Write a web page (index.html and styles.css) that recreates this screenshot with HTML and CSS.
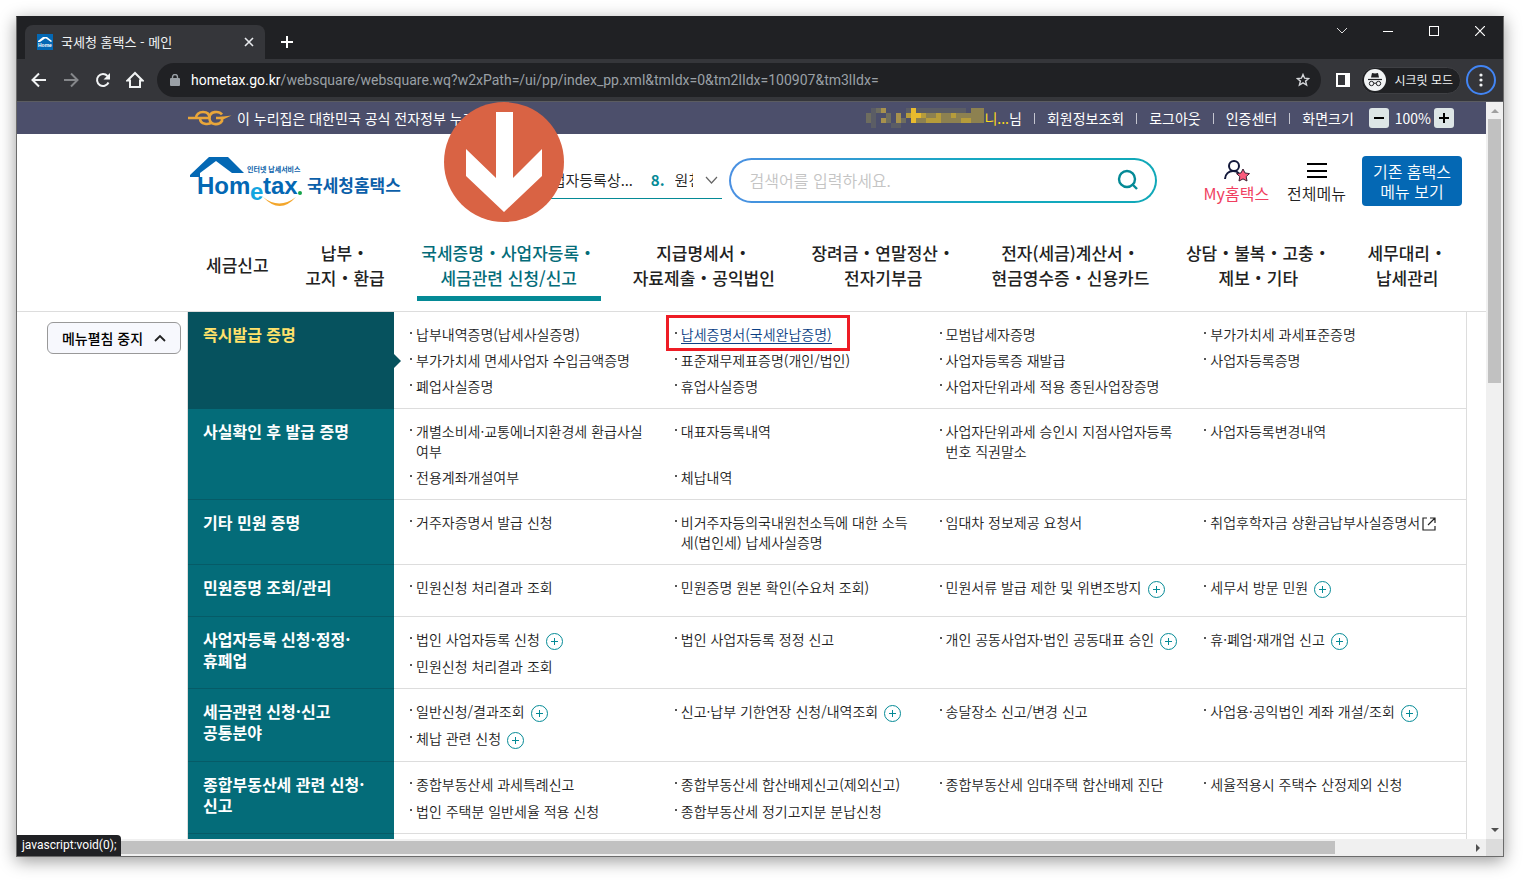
FILE: index.html
```html
<!DOCTYPE html>
<html lang="ko">
<head>
<meta charset="utf-8">
<title>국세청 홈택스 - 메인</title>
<link rel="stylesheet" href="styles.css">
</head>
<body>
<svg class="defs" aria-hidden="true">
  <symbol id="plus" viewBox="0 0 17 17"><circle cx="8.500" cy="8.500" r="8"/><path d="M5 8.500h7M8.500 5v7"/></symbol>
</svg>
<div class="window">
  <div class="tabstrip">
    <div class="tab">
      <svg class="favicon" viewBox="0 0 16 16"><rect width="16" height="16" fill="#0468b4"/><path d="M1 7 6 3h4l5 4-1 1-5-3.500H8L3 8H1z" fill="#fff"/><text x="1" y="13" class="favtext">Home</text></svg>
      <span class="tab-title">국세청 홈택스 - 메인</span>
      <button class="plain" aria-label="탭 닫기"><svg width="10" height="10"><path d="M1 1l8 8M9 1 1 9" stroke="#e8eaed" stroke-width="1.600"/></svg></button>
    </div>
    <button class="plain newtab" aria-label="새 탭"><svg width="12" height="12"><path d="M6 0v12M0 6h12" stroke="#fff" stroke-width="2"/></svg></button>
    <div class="controls">
      <button class="plain" aria-label="탭 검색"><svg width="12" height="8"><path d="M1 1l5 5 5-5" fill="none" stroke="#ddd"/></svg></button>
      <button class="plain" aria-label="최소화"><svg width="10" height="10"><path d="M0 5.500h10" stroke="#fff"/></svg></button>
      <button class="plain" aria-label="최대화"><svg width="10" height="10"><rect x=".5" y=".5" width="9" height="9" fill="none" stroke="#fff"/></svg></button>
      <button class="plain" aria-label="닫기"><svg width="10" height="10"><path d="M0 0l10 10M10 0 0 10" stroke="#fff" stroke-width="1.200"/></svg></button>
    </div>
  </div>
  <div class="toolbar">
    <button class="plain tool" aria-label="뒤로"><svg width="16" height="16"><path d="M15 8H2M8 1.500 1.500 8 8 14.500" fill="none" stroke="#f1f3f4" stroke-width="2"/></svg></button>
    <button class="plain tool" aria-label="앞으로"><svg width="16" height="16"><path d="M1 8h13M8 1.500 14.500 8 8 14.500" fill="none" stroke="#85878a" stroke-width="2"/></svg></button>
    <button class="plain tool" aria-label="새로고침"><svg width="16" height="16"><path d="M13.500 10.500A6 6 0 1 1 12.500 4" fill="none" stroke="#f1f3f4" stroke-width="2"/><path d="M15 1v6.500H8.500z" fill="#f1f3f4"/></svg></button>
    <button class="plain tool" aria-label="홈"><svg width="18" height="18"><path d="M1.500 9.500 9 2l7.500 7.500H14v6.500H4V9.500z" fill="none" stroke="#f1f3f4" stroke-width="2"/></svg></button>
    <div class="address">
      <svg width="10" height="13"><rect y="4" width="10" height="8" rx="1" fill="#9aa0a6"/><path d="M2.500 5V3a2.500 2.500 0 0 1 5 0v2" fill="none" stroke="#9aa0a6" stroke-width="1.400"/></svg>
      <span class="url"><b>hometax.go.kr</b>/websquare/websquare.wq?w2xPath=/ui/pp/index_pp.xml&amp;tmIdx=0&amp;tm2lIdx=100907&amp;tm3lIdx=</span>
      <button class="plain" aria-label="북마크"><svg width="14" height="14" viewBox="0 0 14 14"><path d="M7 1.500 8.600 5.200l4 .3-3 2.600 1 3.900L7 9.900 3.400 12l1-3.900-3-2.600 4-.3z" fill="none" stroke="#d5d7da" stroke-width="1.400"/></svg></button>
    </div>
    <button class="plain panel" aria-label="측면 패널"><svg width="14" height="14"><rect x="1" y="1" width="12" height="12" fill="none" stroke="#fff" stroke-width="2"/><path d="M9 1h4v12H9z" fill="#fff"/></svg></button>
    <div class="incognito">
      <svg width="22" height="22"><circle cx="11" cy="11" r="11" fill="#f1f3f4"/><path d="M7 8.500 8 4l3 .6L14 4l1 4.500z" fill="#202124"/><path d="M4 10.500h14" stroke="#202124" stroke-width="1.200"/><g fill="none" stroke="#202124"><circle cx="7.500" cy="14.500" r="2.200"/><circle cx="14.500" cy="14.500" r="2.200"/><path d="M9.700 14.200h2.600"/></g></svg>
      <span>시크릿 모드</span>
    </div>
    <button class="more" aria-label="메뉴"><svg width="4" height="14" fill="#f1f3f4"><circle cx="2" cy="2" r="1.600"/><circle cx="2" cy="7" r="1.600"/><circle cx="2" cy="12" r="1.600"/></svg></button>
  </div>

  <div class="viewport">
    <div class="page">
      <div class="govbar">
        <svg class="eg" width="44" height="18" viewBox="0 0 44 18" fill="none" stroke="#e9a63a" stroke-width="2.600"><path d="M0 9h21.500M8 9c0-3.500 3-6 7-6 4.500 0 6.500 2.500 6.500 6M12 9c0 7 9 7 12 4"/><path d="M34 5.500C31 1.500 21.500 2 21.500 9s9 8 12.500 3V9h-6"/><path d="M31 8l12.500-1.500L34 11z" fill="#e9a63a" stroke="none"/></svg>
        <span>이 누리집은 대한민국 공식 전자정부 누리집</span>
        <ul class="utility">
          <li class="user"><svg width="118" height="20" viewBox="0 0 118 20"><path fill="#6e6d5f" d="M0 5h5v10H0zM10 0h10v5H10zM20 5h5v10h-5zM35 10h5v5h-5z"/><path fill="#5b5d65" d="M5 0h5v20H5zM25 15h10v5H25zM40 0h60v5H40z"/><path fill="#a7914d" d="M15 0h5v5h-5zM15 10h5v5h-5zM30 5h5v10h-5zM40 5h5v5h-5zM60 5h20v5H60zM95 5h15v10H95z"/><path fill="#8d8150" d="M50 5h68v10H50zM105 0h13v5h-13z"/><path fill="#b69c3b" d="M40 5h5v5h-5zM55 5h5v5h-5zM60 10h15v5H60zM70 5h5v5h-5zM85 5h5v5h-5zM95 10h10v5H95z"/><path fill="#e8ba2e" d="M45 0h5v15h-5zM50 5h5v5h-5z"/></svg><em>니...</em>님</li>
          <li><a href="#">회원정보조회</a></li>
          <li><a href="#">로그아웃</a></li>
          <li><a href="#">인증센터</a></li>
          <li class="zoom">화면크기
            <button aria-label="축소"><svg width="10" height="10"><path d="M0 5h10" stroke="#000" stroke-width="2"/></svg></button>
            <span>100%</span>
            <button aria-label="확대"><svg width="10" height="10"><path d="M0 5h10M5 0v10" stroke="#000" stroke-width="2"/></svg></button>
          </li>
        </ul>
      </div>

      <header class="header">
        <a class="logo" href="#" aria-label="Hometax 국세청홈택스">
          <svg width="212" height="52" viewBox="0 0 212 52">
            <path d="M0 19 19 1h19l16 16H42L26 5 10 17v21H9V21H0z" fill="#0468b4"/>
            <text x="57" y="16" class="logo-small">인터넷 납세서비스</text>
            <text x="7" y="38" class="logo-main">Hom</text>
            <text x="60" y="44" class="logo-e">e</text>
            <text x="73" y="38" class="logo-main">tax</text>
            <circle cx="110" cy="37" r="2" fill="#16a34a"/>
            <path d="M73 41q16 13 33 0-16 18-33 0z" fill="#f3a62b"/>
            <text x="117" y="36" class="logo-ko">국세청홈택스</text>
          </svg>
        </a>
        <div class="keywords">
          <div class="keyword-list"><span>사업자등록상...</span><strong>8.</strong><span class="cut">원천</span></div>
          <button class="plain" aria-label="펼치기"><svg width="13" height="8"><path d="M1 1l5.500 6L12 1" fill="none" stroke="#666" stroke-width="1.200"/></svg></button>
        </div>
        <form class="search">
          <input type="text" placeholder="검색어를 입력하세요." aria-label="검색어">
          <button type="button" class="plain" aria-label="검색"><svg width="22" height="22"><circle cx="10" cy="10" r="8" fill="none" stroke="#048a96" stroke-width="2.400"/><path d="M15 15l5 5" stroke="#048a96" stroke-width="2.400"/></svg></button>
        </form>
        <a class="quick my" href="#"><svg width="28" height="22"><g fill="none" stroke="#12183a" stroke-width="2"><circle cx="12" cy="6" r="5"/><path d="M3 19c0-5 4-8 8-8 3 0 5 1 6 3"/></g><path d="m21 9 2 4 4.500.6-3.300 3 .8 4.400-4-2.100-4 2.100.8-4.400-3.300-3L19 13z" fill="#fb5b7c" stroke="#3a2034"/></svg>My홈택스</a>
        <a class="quick" href="#"><svg width="20" height="22"><path d="M0 4h20M0 11h20M0 17h20" stroke="#000" stroke-width="2"/></svg>전체메뉴</a>
        <button class="old-menu">기존 홈택스<br>메뉴 보기</button>
      </header>

      <nav class="gnb">
        <a href="#">세금신고</a>
        <a href="#">납부・<br>고지・환급</a>
        <a href="#" class="on">국세증명・사업자등록・<br>세금관련 신청/신고</a>
        <a href="#">지급명세서・<br>자료제출・공익법인</a>
        <a href="#">장려금・연말정산・<br>전자기부금</a>
        <a href="#">전자(세금)계산서・<br>현금영수증・신용카드</a>
        <a href="#">상담・불복・고충・<br>제보・기타</a>
        <a href="#">세무대리・<br>납세관리</a>
      </nav>

      <div class="mega">
        <div class="fold"><button>메뉴펼침 중지 <svg width="12" height="8"><path d="M1 7l5-5 5 5" fill="none" stroke="#222" stroke-width="1.800"/></svg></button></div>
        <div class="sections">
          <section class="on">
            <h2>즉시발급 증명</h2>
            <ul>
              <li><a href="#">납부내역증명(납세사실증명)</a></li>
              <li class="marked"><a href="#">납세증명서(국세완납증명)</a></li>
              <li><a href="#">모범납세자증명</a></li>
              <li><a href="#">부가가치세 과세표준증명</a></li>
              <li><a href="#">부가가치세 면세사업자 수입금액증명</a></li>
              <li><a href="#">표준재무제표증명(개인/법인)</a></li>
              <li><a href="#">사업자등록증 재발급</a></li>
              <li><a href="#">사업자등록증명</a></li>
              <li><a href="#">폐업사실증명</a></li>
              <li><a href="#">휴업사실증명</a></li>
              <li><a href="#">사업자단위과세 적용 종된사업장증명</a></li>
            </ul>
          </section>
          <section>
            <h2>사실확인 후 발급 증명</h2>
            <ul>
              <li><a href="#">개별소비세·교통에너지환경세 환급사실<br>여부</a></li>
              <li><a href="#">대표자등록내역</a></li>
              <li><a href="#">사업자단위과세 승인시 지점사업자등록<br>번호 직권말소</a></li>
              <li><a href="#">사업자등록변경내역</a></li>
              <li><a href="#">전용계좌개설여부</a></li>
              <li><a href="#">체납내역</a></li>
            </ul>
          </section>
          <section>
            <h2>기타 민원 증명</h2>
            <ul>
              <li><a href="#">거주자증명서 발급 신청</a></li>
              <li><a href="#">비거주자등의국내원천소득에 대한 소득<br>세(법인세) 납세사실증명</a></li>
              <li><a href="#">임대차 정보제공 요청서</a></li>
              <li><a href="#">취업후학자금 상환금납부사실증명서<svg class="ext" width="14" height="14"><path d="M5 1H1v12h12V9M8 1h5v5M13 1 6 8" fill="none" stroke="#222" stroke-width="1.200"/></svg></a></li>
            </ul>
          </section>
          <section>
            <h2>민원증명 조회/관리</h2>
            <ul>
              <li><a href="#">민원신청 처리결과 조회</a></li>
              <li><a href="#">민원증명 원본 확인(수요처 조회)</a></li>
              <li><a href="#">민원서류 발급 제한 및 위변조방지</a><button class="plus" aria-label="더보기"><svg><use href="#plus"/></svg></button></li>
              <li><a href="#">세무서 방문 민원</a><button class="plus" aria-label="더보기"><svg><use href="#plus"/></svg></button></li>
            </ul>
          </section>
          <section>
            <h2>사업자등록 신청·정정·<br>휴폐업</h2>
            <ul>
              <li><a href="#">법인 사업자등록 신청</a><button class="plus" aria-label="더보기"><svg><use href="#plus"/></svg></button></li>
              <li><a href="#">법인 사업자등록 정정 신고</a></li>
              <li><a href="#">개인 공동사업자·법인 공동대표 승인</a><button class="plus" aria-label="더보기"><svg><use href="#plus"/></svg></button></li>
              <li><a href="#">휴·폐업·재개업 신고</a><button class="plus" aria-label="더보기"><svg><use href="#plus"/></svg></button></li>
              <li><a href="#">민원신청 처리결과 조회</a></li>
            </ul>
          </section>
          <section>
            <h2>세금관련 신청·신고<br>공통분야</h2>
            <ul>
              <li><a href="#">일반신청/결과조회</a><button class="plus" aria-label="더보기"><svg><use href="#plus"/></svg></button></li>
              <li><a href="#">신고·납부 기한연장 신청/내역조회</a><button class="plus" aria-label="더보기"><svg><use href="#plus"/></svg></button></li>
              <li><a href="#">송달장소 신고/변경 신고</a></li>
              <li><a href="#">사업용·공익법인 계좌 개설/조회</a><button class="plus" aria-label="더보기"><svg><use href="#plus"/></svg></button></li>
              <li><a href="#">체납 관련 신청</a><button class="plus" aria-label="더보기"><svg><use href="#plus"/></svg></button></li>
            </ul>
          </section>
          <section class="roomy">
            <h2>종합부동산세 관련 신청·<br>신고</h2>
            <ul>
              <li><a href="#">종합부동산세 과세특례신고</a></li>
              <li><a href="#">종합부동산세 합산배제신고(제외신고)</a></li>
              <li><a href="#">종합부동산세 임대주택 합산배제 진단</a></li>
              <li><a href="#">세율적용시 주택수 산정제외 신청</a></li>
              <li><a href="#">법인 주택분 일반세율 적용 신청</a></li>
              <li><a href="#">종합부동산세 정기고지분 분납신청</a></li>
            </ul>
          </section>
          <section><h2></h2><ul></ul></section>
        </div>
      </div>
    </div>
    <div class="vscroll"><svg width="8" height="4"><path d="M0 4l4-4 4 4z" fill="#a0a0a0"/></svg><div class="vthumb"></div><svg class="end" width="8" height="4"><path d="M0 0l4 4 4-4z" fill="#505050"/></svg></div>
    <div class="hscroll"><div class="hthumb"></div><svg class="end" width="4" height="8"><path d="M0 0l4 4-4 4z" fill="#505050"/></svg></div>
    <div class="corner"></div>
  </div>
  <div class="status">javascript:void(0);</div>
  <svg class="pointer" viewBox="0 0 120 120" aria-hidden="true"><circle cx="60" cy="60" r="60" fill="#d96344"/><path d="M52 10h17v66l29-29v27l-38 36-38-36V47l30 29z" fill="#fff"/></svg>
</div>
</body>
</html>
```

FILE: styles.css
```css
*, *::before, *::after { box-sizing: border-box; }
body {
  margin: 0;
  padding: 16px 21px 23px 16px;
  height: 100vh;
  background: #fff;
  color: #222;
  font: 14px/20px "Noto Sans CJK KR", sans-serif;
  overflow: hidden;
}
ul { list-style: none; margin: 0; padding: 0; }
a { color: inherit; text-decoration: none; }
button { font: inherit; color: inherit; cursor: pointer; }
svg { flex: none; display: block; }
.defs { position: absolute; width: 0; height: 0; }
.plain { border: 0; padding: 0; background: none; display: flex; align-items: center; justify-content: center; }

.window {
  position: relative;
  display: flex;
  flex-direction: column;
  height: 100%;
  border: 1px solid #6b6b6b;
  border-top-color: #202124;
  box-shadow: 0 4px 16px rgba(0, 0, 0, .4);
}

/* browser frame */
.tabstrip { display: flex; align-items: flex-end; height: 42px; padding-left: 8px; background: #202124; }
.tab {
  display: flex; align-items: center;
  width: 240px; height: 34px; padding: 0 11px 0 12px;
  border-radius: 8px 8px 0 0;
  background: #35363a; color: #f1f3f4; font-size: 13px;
}
.favicon { width: 16px; height: 16px; margin-right: 8px; }
.favtext { font: bold 5px "Liberation Sans", sans-serif; fill: #fff; }
.tab-title { flex: 1; }
.newtab { width: 28px; height: 34px; margin-left: 8px; }
.controls { display: flex; align-self: flex-start; margin-left: auto; }
.controls button { width: 46px; height: 28px; }
.toolbar { display: flex; align-items: center; height: 43px; padding: 0 7px 0 6px; background: #35363a; border-bottom: 1px solid #5b5c60; }
.tool { width: 32px; height: 32px; }
.address {
  display: flex; align-items: center; flex: 1;
  height: 34px; margin-left: 6px; padding: 0 11px 0 13px;
  border-radius: 17px; background: #202124;
}
.url { flex: 1; margin-left: 11px; color: #9aa0a6; font: 14px/20px Roboto, sans-serif; white-space: nowrap; }
.url b { font-weight: 400; color: #fff; }
.panel { margin: 0 11px 0 15px; }
.incognito { display: flex; align-items: center; gap: 8px; height: 27px; padding: 0 7px 0 2px; border: 1px solid #3f4044; border-radius: 14px; background: #202124; color: #f1f3f4; font-size: 12px; }
.more { width: 30px; height: 30px; margin-left: 5px; padding: 0; border: 2px solid #4285f4; border-radius: 50%; background: none; display: flex; align-items: center; justify-content: center; }

.viewport { flex: 1; min-height: 0; display: grid; grid-template: minmax(0, 1fr) 17px / minmax(0, 1fr) 17px; }
.page { overflow: hidden; background: #fff; }
.vscroll { display: flex; flex-direction: column; align-items: center; padding: 7px 2px; background: #f0f0f0; }
.vthumb { width: 13px; height: 36.5%; margin-top: 6px; background: #c1c1c1; }
.hscroll { display: flex; align-items: center; padding: 2px 6px 2px 17px; background: #f0f0f0; }
.hthumb { width: 90%; height: 13px; background: #c1c1c1; }
.vscroll .end { margin-top: auto; }
.hscroll .end { margin-left: auto; }
.corner { background: #dcdcdc; }
.status { position: absolute; left: 0; bottom: 0; height: 21px; padding: 0 5px; border-radius: 0 4px 0 0; background: #202124; color: #fff; font: 12px/20px Roboto, sans-serif; }
.pointer { position: absolute; left: 427px; top: 85px; width: 120px; height: 120px; }

/* site header */
.govbar { display: flex; align-items: center; height: 32px; padding: 0 32px 0 171px; background: #4c4f6b; color: #fff; white-space: nowrap; }
.eg { margin-right: 5px; }
.utility { display: flex; align-items: center; margin-left: auto; }
.utility li { display: flex; align-items: center; }
.utility li + li::before { content: ""; width: 1px; height: 11px; margin: 0 12px; background: #c4c5d0; }
.user em { font-style: normal; color: #ffd91a; }
.zoom button { display: flex; align-items: center; justify-content: center; width: 20px; height: 20px; padding: 0; border: 0; border-radius: 3px; background: #dde5e6; }
.zoom button:first-of-type { margin-left: 15px; }
.zoom span { margin: 0 3px 0 6px; }

.header { display: flex; align-items: center; height: 92px; padding: 0 24px 0 173px; }
.logo { margin-top: 4px; }
.logo-main { font: bold 24px "Liberation Sans", sans-serif; fill: #0468b4; }
.logo-e { font: bold 24px "Liberation Sans", sans-serif; fill: #14a5e0; }
.logo-small { font: bold 7px "Noto Sans CJK KR", sans-serif; fill: #0b5fa9; }
.logo-ko { font: bold 17px "Noto Sans CJK KR", sans-serif; fill: #0b5fa9; }
.keywords { display: flex; align-items: center; justify-content: flex-end; gap: 12px; margin-left: auto; width: 190px; height: 38px; padding-right: 4px; border-bottom: 1px solid #048a96; font-size: 15px; font-weight: 350; }
.keyword-list { display: flex; overflow: hidden; white-space: nowrap; }
.keyword-list strong { margin: 0 10px 0 18px; color: #048a96; }
.cut { width: 18px; overflow: hidden; }
.search {
  display: flex; align-items: center; justify-content: space-between;
  width: 428px; height: 45px; margin-left: 7px; padding: 0 16px 0 19px;
  border: 2px solid transparent; border-radius: 23px;
  background: linear-gradient(#fff, #fff) padding-box, linear-gradient(90deg, #4a90e2, #14a9c0 60%, #10a8b8) border-box;
}
.search input { flex: 1; min-width: 0; padding: 0; border: 0; outline: 0; background: none; font: inherit; font-size: 16px; font-weight: 350; }
.search input::placeholder { color: #c4c4c4; }
.quick { display: flex; flex-direction: column; align-items: center; font-size: 16px; font-weight: 350; line-height: 22px; white-space: nowrap; margin: 4px 0 0 18px; }
.my { margin-left: 47px; color: #f03e60; font-weight: 400; }
.old-menu { margin: 2px 0 0 16px; width: 100px; height: 50px; padding: 0; border: 0; border-radius: 4px; background: #0468b4; color: #fff; font-size: 16px; font-weight: 350; line-height: 20px; }

.gnb { display: flex; align-items: center; justify-content: space-between; height: 86px; padding: 0 39px 8px 189px; border-bottom: 1px solid #ddd; font-size: 17px; font-weight: 500; line-height: 25px; text-align: center; white-space: nowrap; }
.gnb a { position: relative; }
.gnb .on { color: #046c79; }
.gnb .on::after { content: ""; position: absolute; left: -4px; right: -5px; bottom: -11px; height: 5px; background: #048a96; }

/* expanded menu */
.mega { display: flex; padding-right: 19px; }
.fold { width: 171px; padding: 10px 6px 0 30px; border-right: 1px solid #ddd; }
.fold button { display: flex; align-items: center; justify-content: center; gap: 11px; width: 100%; height: 32px; padding: 0; border: 1px solid #999; border-radius: 6px; background: #f7f8fd; color: #000; font-weight: 500; }
.sections { flex: 1; min-width: 0; border-right: 1px solid #ddd; }
section { display: grid; grid-template-columns: 206px minmax(0, 1fr); min-height: 52px; }
h2 { position: relative; margin: 0; padding: 12px 15px; background: #046c79; color: #fff; border-bottom: 1px solid #065b67; font-size: 16px; line-height: 21px; white-space: nowrap; }
section.on h2 { background: #06525e; border-color: #06525e; color: #ffe26b; }
section.on h2::after { content: ""; position: absolute; left: 100%; top: 50%; margin-top: -6px; border: 7px solid transparent; border-right-width: 0; border-left-color: #06525e; }
section ul { display: grid; grid-template-columns: repeat(4, minmax(0, 1fr)); align-content: start; row-gap: 6px; padding: 12px 0 12px 13px; border-bottom: 1px solid #ddd; font-weight: 350; white-space: nowrap; }
section li { position: relative; display: flex; padding-left: 9px; }
section li::before { content: ""; position: absolute; left: 3px; top: 8px; width: 2px; height: 2px; background: #555; }
.roomy ul { row-gap: 7px; }
.ext { display: inline-block; margin-left: 2px; vertical-align: -3px; }
.plus { display: flex; height: 21px; margin-left: 6px; padding: 4px 0 0; border: 0; background: none; }
.plus svg { width: 17px; height: 17px; fill: none; stroke: #048a96; overflow: visible; }
.marked a { height: 20px; color: #0b3f85; border-bottom: 1px solid #0b3f85; }
.marked::after { content: ""; position: absolute; left: -6px; top: -9px; width: 184px; height: 36px; border: 3px solid #ee1c25; }
```
